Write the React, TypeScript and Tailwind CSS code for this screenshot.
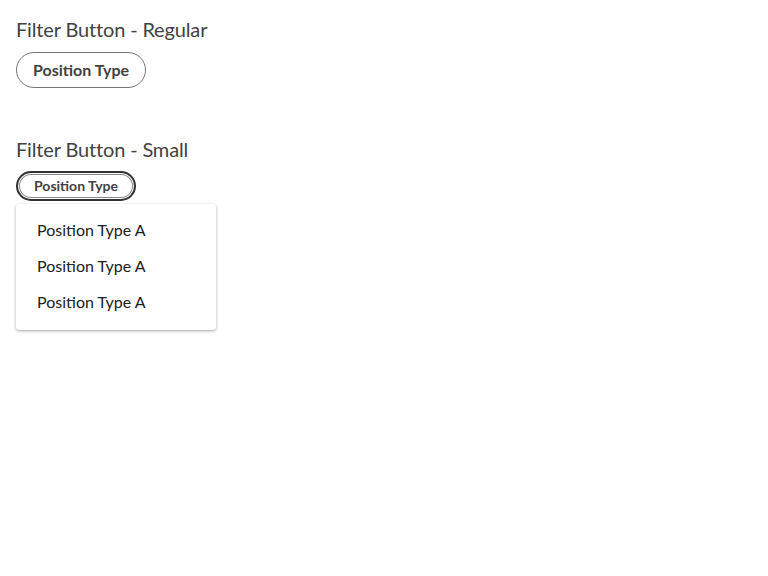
import React from "react";

const items = ["Position Type A", "Position Type A", "Position Type A"];

export default function App() {
  return (
    <div className="min-h-[576px] bg-white px-4 pt-[17px] text-[#424242] font-['Lato','Liberation_Sans',sans-serif]">
      <h2 className="text-[20px] leading-6 tracking-[-0.15px]">Filter Button - Regular</h2>
      <button className="mt-[11px] h-9 rounded-full border border-[#757575] px-4 text-[16px] font-bold leading-none text-[#424242]">
        Position Type
      </button>

      <h2 className="mt-[49px] text-[20px] leading-6 tracking-[-0.15px]">Filter Button - Small</h2>
      <div className="mt-[10px] relative w-fit">
        <button className="h-[30px] rounded-full border-2 border-[#333] px-4 text-[14px] font-bold leading-none text-[#424242] shadow-[inset_0_0_0_1px_#fff,inset_0_0_0_2px_#8a8a8a]">
          Position Type
        </button>
      </div>
      <ul className="mt-[3px] w-[200px] rounded-[3px] bg-white pt-[8px] pb-[10px] shadow-[0_1px_3px_rgba(0,0,0,0.35)]">
        {items.map((label, i) => (
          <li key={i} className="flex h-9 items-center pl-[21px] text-[16px] text-[#212121]">
            {label}
          </li>
        ))}
      </ul>
    </div>
  );
}
